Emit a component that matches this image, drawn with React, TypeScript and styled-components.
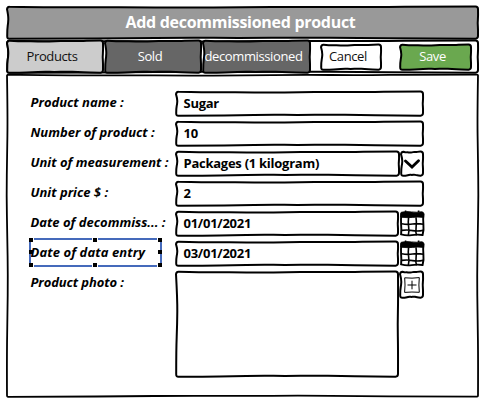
import React from "react";
import styled, { createGlobalStyle } from "styled-components";

const GlobalStyle = createGlobalStyle`
  * { box-sizing: border-box; }
  body {
    margin: 0;
    background: #fff;
    color: #000;
    font-family: "Open Sans", "Noto Sans", sans-serif;
    overflow: hidden;
  }
`;

type Point = [number, number];

const TOP = [0.1, 0.9, 0.6, 1.1, 0.8, 0.2, 0.6, 0, 0];
const RIGHT = [0, 0.2, -0.4, 0.1, 0];
const BOTTOM = [0.2, 0.1, -0.3, -0.9, -0.6, -1, -0.5, -0.1, 0.1];
const LEFT = [0, 1.4, 1.2, 0.2, 0.2];
const TALL_SIDE = [0, 0.7, 0.1, -0.5, 0.3, 0.9, 0.5, -0.2, 0];

/* Builds a closed, slightly wavy rounded rectangle, like a pen stroke. */
function wavyPath(w: number, h: number, r: number) {
  const x0 = 1, y0 = 1, x1 = w - 1, y1 = h - 1;
  const rightWave = h > 200 ? TALL_SIDE.map((d) => -d) : RIGHT;
  const leftWave = h > 200 ? TALL_SIDE : LEFT;
  const along = (a: number, b: number, i: number, n: number) => a + ((b - a) * i) / (n - 1);
  const top = TOP.map((d, i): Point => [along(x0 + r, x1 - r, i, TOP.length), y0 + d]);
  const right = rightWave.map((d, i): Point => [x1 + d, along(y0 + r, y1 - r, i, rightWave.length)]);
  const bottom = BOTTOM.map((d, i): Point => [along(x0 + r, x1 - r, i, BOTTOM.length), y1 + d]).reverse();
  const left = leftWave.map((d, i): Point => [x0 + d, along(y0 + r, y1 - r, i, leftWave.length)]).reverse();
  const corners: Point[] = [[x1, y0], [x1, y1], [x0, y1], [x0 + 0.5, y0]];
  let d = `M${top[0][0]} ${top[0][1]}`;
  [top, right, bottom, left].forEach((side, s) => {
    for (let i = 1; i < side.length - 1; i++) {
      const [cx, cy] = side[i];
      const next = side[i + 1];
      const last = i === side.length - 2;
      const ex = last ? next[0] : (cx + next[0]) / 2;
      const ey = last ? next[1] : (cy + next[1]) / 2;
      d += `Q${cx} ${cy} ${ex} ${ey}`;
    }
    const following = [right, bottom, left, top][s][0];
    d += `Q${corners[s][0]} ${corners[s][1]} ${following[0]} ${following[1]}`;
  });
  return d + "Z";
}

const Frame = styled.div<{ $w: number; $h: number }>`
  position: relative;
  isolation: isolate;
  flex: none;
  display: flex;
  width: ${(p) => p.$w}px;
  height: ${(p) => p.$h}px;
`;

const Outline = styled.svg`
  position: absolute;
  inset: 0;
  z-index: -1;
  overflow: visible;
`;

interface SketchProps {
  w: number;
  h: number;
  fill?: string;
  r?: number;
  stroke?: number;
  className?: string;
  children?: React.ReactNode;
}

function Sketch({ w, h, fill = "#fff", r = 2.5, stroke = 2, className, children }: SketchProps) {
  return (
    <Frame $w={w} $h={h} className={className}>
      <Outline width={w} height={h}>
        <path
          d={wavyPath(w, h, r)}
          transform="translate(0 -0.4)"
          fill={fill}
          stroke="#000"
          strokeWidth={stroke}
          strokeLinejoin="round"
        />
      </Outline>
      {children}
    </Frame>
  );
}

const Screen = styled.main`
  width: 493px;
  height: 406px;
  padding: 6px 0 0 6px;
  background: #fff;
`;

const TitleBar = styled(Sketch)`
  align-items: center;
  justify-content: center;
  padding: 0 4px 3px 0;
  color: #fff;
  font-size: 16px;
  font-weight: 700;
  letter-spacing: -0.29px;
`;

const Toolbar = styled(Sketch)`
  align-items: center;
`;

const Tab = styled(Sketch)<{ $light?: boolean }>`
  align-items: center;
  justify-content: center;
  padding: 0 6px 2px 0;
  color: ${(p) => (p.$light ? "#111" : "#fff")};
  font-size: 13px;
  letter-spacing: -0.38px;
  white-space: nowrap;
`;

const Action = styled(Tab)<{ $gap: number }>`
  margin-left: ${(p) => p.$gap}px;
`;

const Panel = styled(Sketch)`
  padding: 17px 0 0 24px;
`;

const Form = styled.form`
  display: flex;
  flex-direction: column;
  gap: 4px;
`;

const Row = styled.div`
  display: flex;
  align-items: flex-start;
  height: 26px;
`;

const Label = styled.div<{ $spacing?: number }>`
  position: relative;
  flex: none;
  width: 145px;
  height: 26px;
  padding-left: 0.5px;
  line-height: 23px;
  font-size: 13px;
  font-style: italic;
  font-weight: 700;
  white-space: pre;
  letter-spacing: ${(p) => p.$spacing ?? 0}px;
`;

const Field = styled(Sketch)`
  align-items: center;
  padding: 0 0 3px 8.5px;
  font-size: 13px;
  font-weight: 700;
  letter-spacing: -0.26px;
  white-space: nowrap;
`;

const IconButton = styled(Sketch)`
  align-items: center;
  justify-content: center;
  padding-bottom: 1px;
`;

const Calendar = styled.svg`
  flex: none;
  margin-left: 1px;
  overflow: visible;
`;

const Selection = styled.svg`
  position: absolute;
  left: 0;
  top: -2px;
  overflow: visible;
`;

function CalendarIcon() {
  return (
    <Calendar width="25" height="26" fill="none" stroke="#000">
      <g transform="translate(-0.4 -0.6)">
        <path d="M2 3Q1 9 1.5 14T1.5 24Q7 25.5 12 24.7T23 24.6Q24.4 19 23.8 14T24 3" fill="#fff" strokeWidth="1.9" />
        <path d="M1 6.8V3Q1 1.6 3 1.6Q7 .8 12 1.5T22 1.3Q24.3 1.4 24 3.5V7Q18 6.4 13 7T1 6.8Z" fill="#000" strokeWidth=".8" />
        <path d="M6 0.2V2M19 0.2V2" strokeWidth="1.6" />
        <path d="M9 7Q8.3 12 9 16T8.7 25M16.4 7Q17.2 12 16.5 17T17 25M2 13.4Q8 14.4 13 13.6T24 13.9M2 20Q8 19.2 13 20.2T24 19.8" strokeWidth="1.6" />
      </g>
    </Calendar>
  );
}

const HANDLES: Point[] = [
  [1, 1], [65, 1], [130, 1],
  [1, 13], [130, 13],
  [1, 26], [65, 26], [130, 26],
];

function SelectionBox() {
  return (
    <Selection width="132" height="28">
      <rect x="0" y="0" width="131" height="27" fill="none" stroke="#456abb" strokeWidth="2" />
      {HANDLES.map(([x, y]) => (
        <g key={`${x}-${y}`}>
          {y !== 13 && <rect x={x - 3} y={y - 2} width="6" height="4" fill="#fff" />}
          <rect x={x - 2} y={y - 2} width="4" height="4" fill="#000" />
        </g>
      ))}
    </Selection>
  );
}

export default function App() {
  return (
    <>
      <GlobalStyle />
      <Screen>
        <TitleBar w={473} h={34} fill="#999">Add decommissioned product</TitleBar>
        <Toolbar w={473} h={34}>
          <Tab w={98} h={34} fill="#ccc" $light>Products</Tab>
          <Tab w={98} h={34} fill="#666">Sold</Tab>
          <Tab w={109} h={34} fill="#666">decommissioned</Tab>
          <Action w={62} h={27} $gap={9} $light>Cancel</Action>
          <Action w={73} h={27} $gap={17} fill="#6aa84f">Save</Action>
        </Toolbar>
        <Panel w={473} h={324} r={1} stroke={1.8}>
          <Form>
            <Row><Label>Product name :</Label><Field w={249} h={26}>Sugar</Field></Row>
            <Row><Label>Number of product :</Label><Field w={249} h={26}>10</Field></Row>
            <Row>
              <Label>Unit of measurement :</Label>
              <Field w={225} h={26}>Packages (1 kilogram)</Field>
              <IconButton w={24} h={26}>
                <svg width="16" height="10" fill="none" stroke="#000" strokeWidth="2.8" strokeLinecap="round">
                  <path d="M1.5 2L8 8L14.5 1.7" />
                </svg>
              </IconButton>
            </Row>
            <Row><Label>Unit price $ :</Label><Field w={249} h={26}>2</Field></Row>
            <Row>
              <Label>Date of decommiss... :</Label>
              <Field w={224} h={26}>01/01/2021</Field>
              <CalendarIcon />
            </Row>
            <Row>
              <Label $spacing={0.1}>Date of data entry<SelectionBox /></Label>
              <Field w={224} h={26}>03/01/2021</Field>
              <CalendarIcon />
            </Row>
            <Row>
              <Label $spacing={-0.1}>Product photo :</Label>
              <Field w={224} h={107} />
              <IconButton w={25} h={28}>
                <svg width="16" height="16" fill="none" stroke="#000" strokeWidth="1">
                  <path d="M.7 .8Q8 1.6 15.3 .6Q14.5 8 15.3 15.3Q8 14.7 .6 15.4Q1.4 8 .7 .8ZM8 3.7V12.3M3.5 8H12.5" />
                </svg>
              </IconButton>
            </Row>
          </Form>
        </Panel>
      </Screen>
    </>
  );
}
